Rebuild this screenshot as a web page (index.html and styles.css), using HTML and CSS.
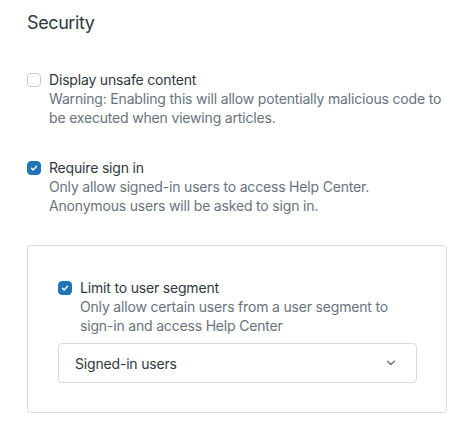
FILE: index.html
```html
<!DOCTYPE html>
<html>
<head>
<meta charset="utf-8">
<link rel="stylesheet" href="styles.css">
</head>
<body>
<div class="page">
  <h2 class="title">Security</h2>

  <div class="field field-first">
    <span class="box"></span>
    <div class="text">
      <div class="label">Display unsafe content</div>
      <div class="hint">Warning: Enabling this will allow potentially malicious code to<br>be executed when viewing articles.</div>
    </div>
  </div>

  <div class="field field-second">
    <span class="box checked"><svg viewBox="0 0 12 12" width="12" height="12"><path d="M3.5 6.2l1.7 1.7 3.3-3.6" fill="none" stroke="#fff" stroke-width="1.5" stroke-linecap="round" stroke-linejoin="round"/></svg></span>
    <div class="text">
      <div class="label">Require sign in</div>
      <div class="hint">Only allow signed-in users to access Help Center.<br>Anonymous users will be asked to sign in.</div>
    </div>
  </div>

  <div class="panel">
    <div class="field">
      <span class="box checked"><svg viewBox="0 0 12 12" width="12" height="12"><path d="M3.5 6.2l1.7 1.7 3.3-3.6" fill="none" stroke="#fff" stroke-width="1.5" stroke-linecap="round" stroke-linejoin="round"/></svg></span>
      <div class="text">
        <div class="label">Limit to user segment</div>
        <div class="hint">Only allow certain users from a user segment to<br>sign-in and access Help Center</div>
      </div>
    </div>
    <div class="select">
      <span class="select-value">Signed-in users</span>
      <svg class="chevron" viewBox="0 0 10 6" width="10" height="6"><path d="M1.5 1.2l3.5 3.4 3.5-3.4" fill="none" stroke="#68737d" stroke-width="1.4" stroke-linecap="round" stroke-linejoin="round"/></svg>
    </div>
  </div>
</div>
</body>
</html>
```

FILE: styles.css
```css
* { box-sizing: border-box; }
html, body { margin: 0; padding: 0; background: #fff; }
body {
  font-family: Inter, "Noto Sans", "Liberation Sans", sans-serif;
  color: #2f3941;
  font-size: 14px;
  line-height: 19px;
  letter-spacing: -0.18px;
}
.page {
  padding: 11px 0 0 27px;
  width: 447px;
}
.title {
  margin: 0;
  font-size: 18px;
  font-weight: 400;
  line-height: 24px;
  letter-spacing: -0.4px;
  color: #2f3941;
}
.field {
  display: flex;
  gap: 8px;
  align-items: flex-start;
}
.field-first { margin-top: 35px; }
.field-second { margin-top: 31px; }
.box {
  flex: none;
  width: 14px;
  height: 14px;
  margin-top: 3px;
  border: 1px solid #c2c8cc;
  border-radius: 4px;
  background: #fff;
  display: flex;
  align-items: center;
  justify-content: center;
}
.box.checked {
  background: #1f73b7;
  border-color: #1f73b7;
}
.box svg { display: block; }
.text { white-space: nowrap; }
.label { color: #2f3941; }
.hint { color: #68737d; }
.panel {
  margin-top: 30px;
  width: 420px;
  border: 1px solid #d8dcde;
  border-radius: 4px;
  padding: 32px 29px 29px 30px;
}
.select {
  margin-top: 8px;
  height: 40px;
  border: 1px solid #d8dcde;
  border-radius: 4px;
  display: flex;
  align-items: center;
  justify-content: space-between;
  padding: 0 20px 0 16px;
}
.select-value { color: #2f3941; }
.chevron { display: block; }
```
